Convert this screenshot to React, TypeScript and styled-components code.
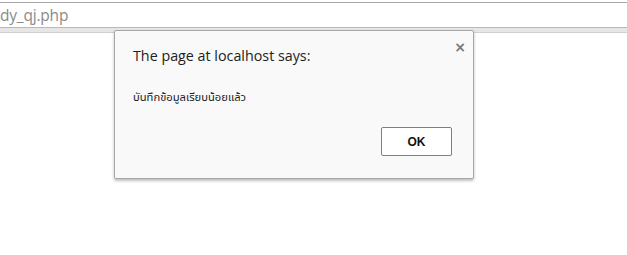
import React from "react"
import styled, { createGlobalStyle } from "styled-components"

const GlobalStyle = createGlobalStyle`
  html, body {
    margin: 0;
    padding: 0;
    background: #ffffff;
  }
  body {
    width: 627px;
    height: 255px;
    overflow: hidden;
    font-family: "Open Sans", "Noto Sans", sans-serif;
  }
`

const Page = styled.div`
  position: relative;
  width: 627px;
  height: 255px;
  background: #fff;
`

const TopEdge = styled.div`
  height: 2px;
  background: #fff;
  border-bottom: 1px solid #a9a9a9;
`

const AddressBar = styled.div`
  height: 24px;
  display: flex;
  align-items: center;
  padding-left: 0;
  color: #8a8a8a;
  font-family: "Open Sans", "Noto Sans", sans-serif;
  font-size: 15.5px;
  letter-spacing: -0.2px;
  border-bottom: 1px solid #b9b9b9;
`

const Band = styled.div`
  height: 4px;
  background: #e6e6e6;
  border-bottom: 1px solid #cfcfcf;
`

const Dialog = styled.div`
  position: absolute;
  left: 114px;
  top: 30px;
  width: 360px;
  height: 149px;
  box-sizing: border-box;
  background: #f9f9f9;
  border: 1px solid #a7a7a7;
  border-radius: 2px;
  box-shadow: 0 2px 3px rgba(0, 0, 0, 0.25);
  padding: 14px 20px 0 18px;
  display: flex;
  flex-direction: column;
`

const Close = styled.div`
  position: absolute;
  right: 7px;
  top: 9px;
  color: #7a7a7a;
  font-family: "DejaVu Sans", sans-serif;
  font-size: 14px;
  font-weight: bold;
  line-height: 14px;
`

const Title = styled.div`
  font-family: "Open Sans", "Noto Sans", sans-serif;
  font-size: 14.3px;
  color: #222;
  line-height: 22px;
`

const Message = styled.div`
  margin-top: 23px;
  font-family: "Noto Sans Thai", "Tahoma", "DejaVu Sans", sans-serif;
  font-size: 11.2px;
  color: #222;
  line-height: 16px;
`

const Footer = styled.div`
  margin-top: auto;
  margin-bottom: 22px;
  display: flex;
  justify-content: flex-end;
`

const Button = styled.button`
  width: 71px;
  height: 29px;
  margin-right: 1px;
  background: #fff;
  border: 1px solid #4d86e0;
  border-radius: 2px;
  font-family: "Liberation Sans", Arial, sans-serif;
  font-weight: bold;
  font-size: 12px;
  color: #111;
  padding: 0;
`

export default function App() {
  return (
    <Page>
      <GlobalStyle />
      <TopEdge />
      <AddressBar>dy_qj.php</AddressBar>
      <Band />
      <Dialog>
        <Close>×</Close>
        <Title>The page at localhost says:</Title>
        <Message>บันทึกข้อมูลเรียบน้อยแล้ว</Message>
        <Footer>
          <Button>OK</Button>
        </Footer>
      </Dialog>
    </Page>
  )
}
